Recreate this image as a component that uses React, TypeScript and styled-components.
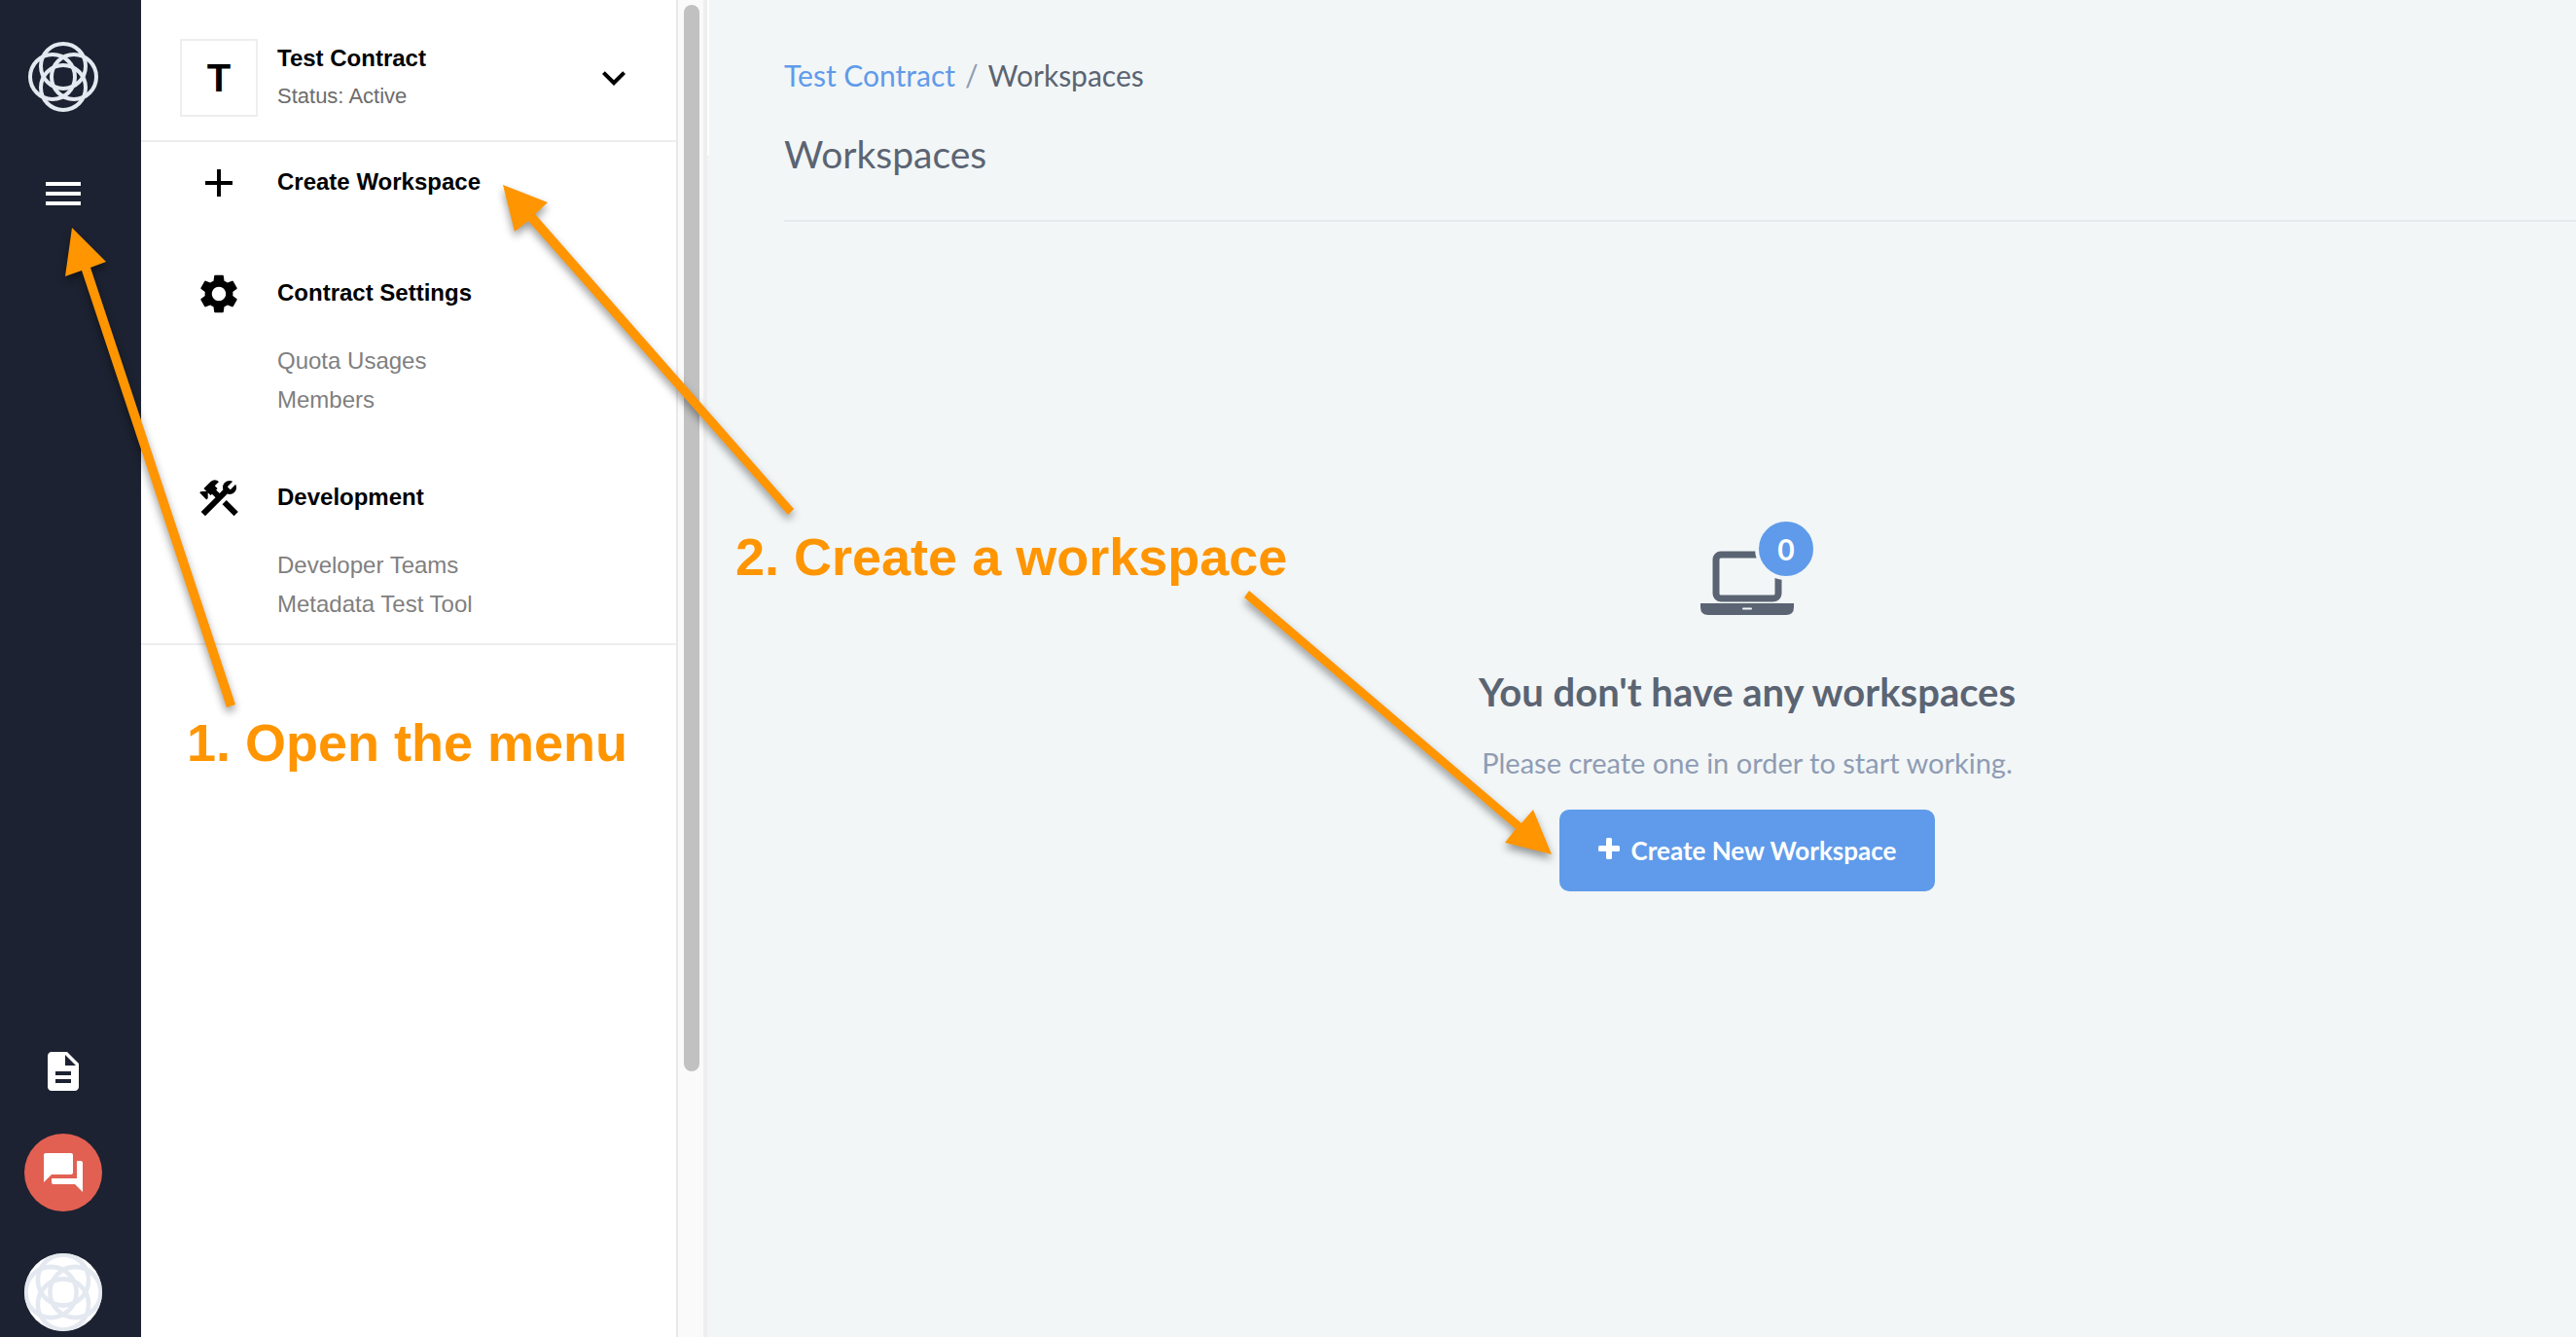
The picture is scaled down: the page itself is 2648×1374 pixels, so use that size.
import React from "react";
import styled, { createGlobalStyle, css } from "styled-components";
import { MdAdd, MdConstruction, MdDescription, MdExpandMore, MdMenu, MdQuestionAnswer, MdSettings } from "react-icons/md";

const GlobalStyle = createGlobalStyle`
  *, *::before, *::after { box-sizing: border-box; }
  body {
    margin: 0;
    background: #f2f6f7;
    font-family: "Liberation Sans", Arial, sans-serif;
  }
  h1, h2, p, ul, nav { margin: 0; padding: 0; }
  ul { list-style: none; }
  a { text-decoration: none; color: inherit; }
  svg { display: block; }
`;

const contentFont = `Lato, "Open Sans", sans-serif`;

const Shell = styled.div`
  position: relative;
  display: flex;
  min-height: 100vh;
  overflow: hidden;
`;

const Rail = styled.aside`
  display: flex;
  flex-direction: column;
  align-items: center;
  justify-content: space-between;
  flex: none;
  padding: 42px 40px 6px 25px;
  background: #1c2231;
`;

const RailGroup = styled.div<{ $gap: number }>`
  display: flex;
  flex-direction: column;
  align-items: center;
  gap: ${(p) => p.$gap}px;
`;

const RailButton = styled.button<{ $fill?: string; $round?: boolean }>`
  display: flex;
  align-items: center;
  justify-content: center;
  width: 80px;
  padding: 0;
  border: 0;
  color: #fff;
  cursor: pointer;
  background: ${(p) => p.$fill ?? "transparent"};
  overflow: hidden;
  ${(p) =>
    p.$round
      ? css`
          height: 80px;
          border-radius: 50%;
        `
      : css`
          height: 42px;
        `}

  svg {
    flex: none;
  }
`;

const Panel = styled.aside`
  flex: none;
  width: 552px;
  background: #fff;
  border-right: 2px solid #e8e8e8;
`;

const Contract = styled.header`
  display: flex;
  align-items: center;
  gap: 20px;
  padding: 40px 40px 24px;
  border-bottom: 2px solid #eeeeee;
`;

const Initial = styled.div`
  display: flex;
  align-items: center;
  justify-content: center;
  width: 80px;
  height: 80px;
  border: 2px solid #eeeeee;
  font-size: 40px;
  font-weight: 700;
`;

const ContractText = styled.div`
  flex: 1;
  padding-bottom: 2px;
  line-height: 39px;
`;

const ContractName = styled.p`
  font-size: 24px;
  font-weight: 700;
`;

const ContractStatus = styled.p`
  font-size: 22px;
  color: #6c6c6c;
`;

const IconButton = styled.button`
  padding: 0;
  border: 0;
  background: none;
  color: #000;
  cursor: pointer;
`;

const Menu = styled.nav`
  display: flex;
  flex-direction: column;
  gap: 48px;
  padding: 9px 40px 20px;
  border-bottom: 2px solid #eeeeee;
`;

const MenuHead = styled.a`
  display: flex;
  align-items: center;
  gap: 20px;
  min-height: 66px;
  font-size: 24px;
  line-height: 28px;
  font-weight: 700;
  color: #000;
`;

const MenuIcon = styled.span`
  display: flex;
  justify-content: center;
  width: 80px;
`;

const MenuLabel = styled.span`
  padding-bottom: 3px;
`;

const SubList = styled.ul`
  padding: 16px 0 0 100px;
  font-size: 24px;
  line-height: 40px;
  color: #7f7f7f;
`;

const ScrollTrack = styled.div`
  flex: none;
  width: 30px;
  padding: 5px 4px 5px 6px;
  background: #fafafa;
  border-right: 4px solid #eeeeee;
`;

const ScrollThumb = styled.div`
  width: 16px;
  height: calc(80vh - 3px);
  border-radius: 8px;
  background: #c1c1c1;
`;

const Edge = styled.div`
  align-self: flex-start;
  flex: none;
  width: 2px;
  height: 162px;
  background: #fff;
  border-bottom: 2px solid #eeeeee;
`;

const Main = styled.main`
  flex: 1;
  min-width: 0;
  padding: 57px 0 0 77px;
  font-family: ${contentFont};
  color: #5b6472;
`;

const Crumbs = styled.nav`
  display: flex;
  gap: 10px;
  font-size: 30px;
  line-height: 40px;
`;

const CrumbLink = styled.a`
  color: #5f9bea;
`;

const CrumbSlash = styled.span`
  color: #8f9cb3;
`;

const PageTitle = styled.h1`
  padding: 36px 0 42px;
  font-size: 39px;
  line-height: 51px;
  font-weight: 400;
  border-bottom: 2px solid #e6eaec;
`;

const Empty = styled.section`
  display: flex;
  flex-direction: column;
  align-items: center;
  padding: 308px 0 0 138px;
`;

const LaptopBox = styled.div`
  position: relative;
  padding-top: 30px;
`;

const CountBadge = styled.span`
  position: absolute;
  top: -4px;
  right: -24px;
  display: flex;
  align-items: center;
  justify-content: center;
  width: 64px;
  height: 64px;
  border: 4px solid #f2f6f7;
  border-radius: 50%;
  background: #5f9bea;
  color: #fff;
  font-size: 30px;
  line-height: 40px;
  font-weight: 700;
`;

const EmptyTitle = styled.h2`
  margin-top: 54px;
  font-size: 40px;
  line-height: 50px;
  font-weight: 700;
`;

const EmptyText = styled.p`
  margin-top: 28px;
  font-size: 29px;
  line-height: 40px;
  color: #8f9cb3;
`;

const CreateButton = styled.button`
  display: flex;
  align-items: center;
  gap: 12px;
  height: 84px;
  margin-top: 28px;
  padding: 0 40px;
  border: 0;
  border-radius: 10px;
  background: #5f9bea;
  color: #fff;
  font-family: ${contentFont};
  font-size: 26px;
  font-weight: 700;
  cursor: pointer;
`;

const Arrows = styled.svg`
  position: absolute;
  top: 0;
  left: 0;
  pointer-events: none;
  filter: drop-shadow(0 5px 4px rgba(0, 0, 0, 0.4));
`;

const Note = styled.p<{ $x: number; $y: number }>`
  position: absolute;
  left: ${(p) => p.$x}px;
  top: ${(p) => p.$y}px;
  font-size: 54px;
  line-height: 60px;
  font-weight: 700;
  white-space: nowrap;
  color: #ff9500;
`;

function Rosette({ size }: { size: number }) {
  return (
    <svg width={size} height={size} viewBox="-1 -1 74 74" fill="none" stroke="#e4e8f0" strokeWidth={4} aria-hidden="true">
      <circle cx="36" cy="25" r="23" />
      <circle cx="36" cy="47" r="23" />
      <circle cx="25" cy="36" r="23" />
      <circle cx="47" cy="36" r="23" />
    </svg>
  );
}

function Laptop() {
  return (
    <svg width="96" height="66" viewBox="0 0 96 66" fill="none" aria-hidden="true">
      <rect x="16" y="4" width="64" height="45" rx="5" stroke="#5b6472" strokeWidth="7" />
      <path d="M0 54h96v4q0 8-8 8H8q-8 0-8-8z" fill="#5b6472" />
      <path d="M44 59.500h8" stroke="#f2f6f7" strokeWidth="2" strokeLinecap="round" />
    </svg>
  );
}

function Plus() {
  return (
    <svg width="22" height="30" viewBox="0 0 22 30" fill="#fff" aria-hidden="true">
      <rect x="8" y="2" width="6" height="22" rx="1.500" />
      <rect x="0" y="10" width="22" height="6" rx="1.500" />
    </svg>
  );
}

const sections = [
  { title: "Contract Settings", icon: <MdSettings size={48} />, links: ["Quota Usages", "Members"] },
  { title: "Development", icon: <MdConstruction size={48} />, links: ["Developer Teams", "Metadata Test Tool"] },
];

export default function App() {
  return (
    <Shell>
      <GlobalStyle />
      <Rail>
        <RailGroup $gap={62}>
          <Rosette size={74} />
          <RailButton aria-label="Menu"><MdMenu size={48} /></RailButton>
        </RailGroup>
        <RailGroup $gap={43}>
          <RailButton aria-label="Documentation"><MdDescription size={48} /></RailButton>
          <RailButton aria-label="Chat" $round $fill="#e26052"><MdQuestionAnswer size={48} /></RailButton>
          <RailButton aria-label="Account" $round $fill="#fff"><Rosette size={84} /></RailButton>
        </RailGroup>
      </Rail>
      <Panel>
        <Contract>
          <Initial>T</Initial>
          <ContractText>
            <ContractName>Test Contract</ContractName>
            <ContractStatus>Status: Active</ContractStatus>
          </ContractText>
          <IconButton aria-label="Switch contract"><MdExpandMore size={48} /></IconButton>
        </Contract>
        <Menu>
          <MenuHead href="#create">
            <MenuIcon><MdAdd size={48} /></MenuIcon>
            <MenuLabel>Create Workspace</MenuLabel>
          </MenuHead>
          {sections.map((s) => (
            <div key={s.title}>
              <MenuHead href="#section">
                <MenuIcon>{s.icon}</MenuIcon>
                <MenuLabel>{s.title}</MenuLabel>
              </MenuHead>
              <SubList>
                {s.links.map((l) => (
                  <li key={l}><a href="#item">{l}</a></li>
                ))}
              </SubList>
            </div>
          ))}
        </Menu>
      </Panel>
      <ScrollTrack><ScrollThumb /></ScrollTrack>
      <Edge />
      <Main>
        <Crumbs aria-label="Breadcrumb">
          <CrumbLink href="#contract">Test Contract</CrumbLink>
          <CrumbSlash>/</CrumbSlash>
          <span>Workspaces</span>
        </Crumbs>
        <PageTitle>Workspaces</PageTitle>
        <Empty>
          <LaptopBox>
            <Laptop />
            <CountBadge>0</CountBadge>
          </LaptopBox>
          <EmptyTitle>You don't have any workspaces</EmptyTitle>
          <EmptyText>Please create one in order to start working.</EmptyText>
          <CreateButton>
            <Plus />
            Create New Workspace
          </CreateButton>
        </Empty>
      </Main>
      <Arrows width="1640" height="920" fill="#ff9500" aria-hidden="true">
        <path d="M74 234L109 269L93 275L242 724L233 727L84 278L67 284Z" />
        <path d="M517 190L563 208L550 220L816 523L810 529L543 227L529 238Z" />
        <path d="M1595 878L1547 866L1558 852L1279 614L1284 607L1564 846L1576 832Z" />
      </Arrows>
      <Note $x={192} $y={733}>1. Open the menu</Note>
      <Note $x={756} $y={542}>2. Create a workspace</Note>
    </Shell>
  );
}
